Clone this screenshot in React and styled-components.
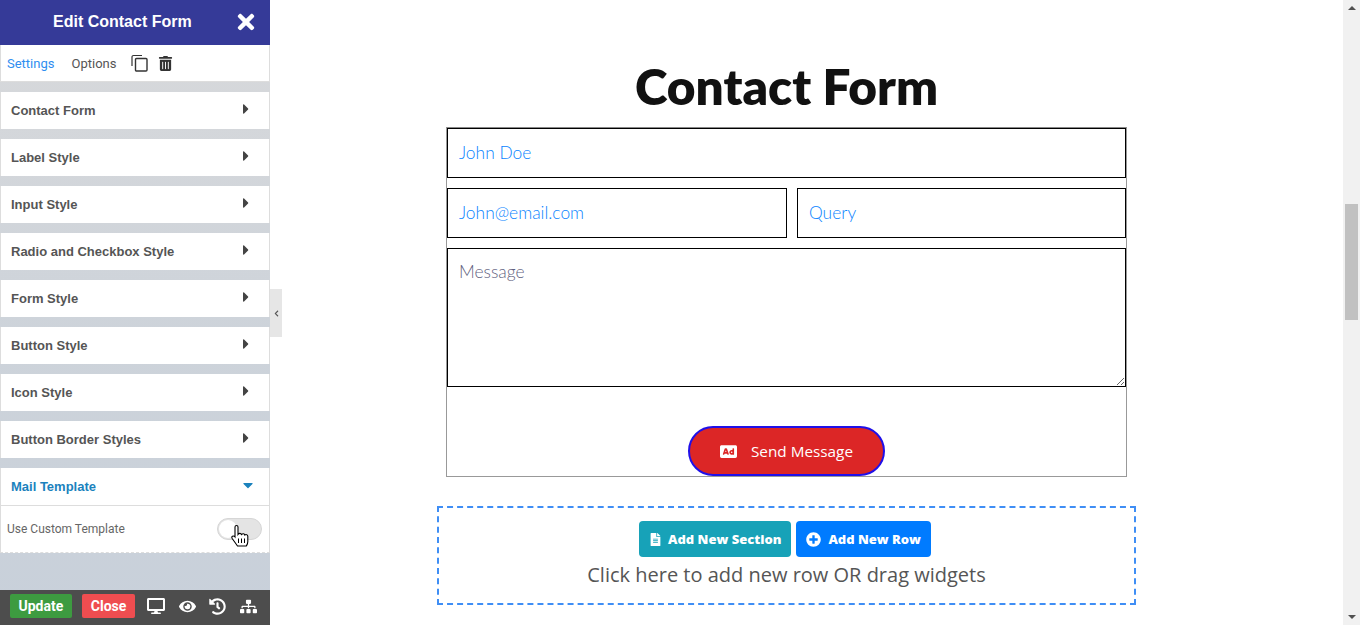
import styled, { createGlobalStyle } from "styled-components";
import {
  FaTimes, FaCaretRight, FaCaretDown, FaTrashAlt, FaDesktop, FaEye, FaHistory,
  FaSitemap, FaFileAlt, FaPlusCircle, FaAd, FaChevronLeft,
} from "react-icons/fa";

const sections = [
  "Contact Form", "Label Style", "Input Style", "Radio and Checkbox Style",
  "Form Style", "Button Style", "Icon Style", "Button Border Styles",
];

const Global = createGlobalStyle`
  html, body { margin: 0; height: 100%; overflow: hidden; background: #fff; }
  * { box-sizing: border-box; }
`;

const Page = styled.div`
  display: flex;
  width: 1360px;
  height: 625px;
  overflow: hidden;
`;

const Sidebar = styled.aside`
  position: relative;
  width: 270px;
  height: 625px;
  flex: none;
  display: flex;
  flex-direction: column;
  background: linear-gradient(180deg, #d8d9db 0%, #cdd3da 55%, #c8d0da 100%);
  font-family: Roboto, sans-serif;
`;

const Header = styled.header`
  height: 45px;
  flex: none;
  background: #353a98;
  color: #fff;
  display: flex;
  align-items: center;
  justify-content: space-between;
  padding: 0 12px 2px 53px;
  font: bold 16px "Liberation Sans", sans-serif;
  svg { font-size: 24px; }
`;

const Tabs = styled.div`
  height: 37px;
  flex: none;
  background: #fff;
  border: 1px solid #ddd;
  border-top: 0;
  display: flex;
  align-items: center;
  padding: 0 6px;
  font-size: 13px;
  color: #555;
`;

const Tab = styled.span`
  color: ${(p) => (p.$active ? "#2f8ef0" : "#555")};
  margin-right: ${(p) => (p.$active ? "17px" : "15px")};
`;

const CopyIcon = styled.svg`
  width: 17px;
  height: 18px;
  margin-right: 10px;
  fill: none;
  stroke: #333;
  stroke-width: 1.200;
`;

const TrashButton = styled.span`
  display: flex;
  color: #333;
  font-size: 15px;
`;

const Accordion = styled.div`
  display: flex;
  flex-direction: column;
  gap: 10px;
  padding-top: 10px;
`;

const Row = styled.div`
  height: 37px;
  background: #fff;
  border: 1px solid #ddd;
  border-width: 0 1px;
  display: flex;
  align-items: center;
  justify-content: space-between;
  padding: 0 ${(p) => (p.$open ? 13 : 15)}px 0 10px;
  font: bold 13px "Liberation Sans", sans-serif;
  color: ${(p) => (p.$open ? "#1b82bd" : "#555")};
  svg { font-size: 16px; margin-top: -3px; color: ${(p) => (p.$open ? "#1b82bd" : "#444")}; }
`;

const OpenGroup = styled.div`
  display: flex;
  flex-direction: column;
`;

const RowBody = styled.div`
  height: 48px;
  background: #fff;
  border: 1px solid #ddd;
  border-bottom: 1px dashed #ddd;
  display: flex;
  align-items: center;
  justify-content: space-between;
  padding: 0 7px 0 6px;
  font-size: 12px;
  color: #666;
`;

const Switch = styled.span`
  position: relative;
  width: 45px;
  height: 22px;
  border-radius: 11px;
  background: #e4e4e4;
  border: 1px solid #d6d6d6;
  &::before {
    content: "";
    position: absolute;
    left: 1px;
    top: 1px;
    width: 18px;
    height: 18px;
    border-radius: 50%;
    background: #fff;
  }
`;

const HandCursor = styled.svg`
  position: absolute;
  left: 13px;
  top: 5px;
  width: 18px;
  height: 25px;
`;

const Footer = styled.footer`
  margin-top: auto;
  height: 35px;
  flex: none;
  background: #4d4d4d;
  display: flex;
  align-items: center;
  padding: 0 13px 3px 10px;
  color: #fff;
`;

const FooterButton = styled.span`
  height: 24px;
  padding: 0 ${(p) => (p.$red ? 9 : 8.5)}px;
  background: ${(p) => (p.$red ? "#ef4d50" : "#3d9b40")};
  border-radius: 2px;
  margin-right: ${(p) => (p.$red ? 12 : 10)}px;
  display: flex;
  align-items: center;
  font-size: 14px;
  font-weight: 700;
`;

const FooterIcons = styled.div`
  flex: 1;
  display: flex;
  align-items: center;
  justify-content: space-between;
  svg { display: block; }
`;

const Handle = styled.div`
  position: absolute;
  left: 270px;
  top: 289px;
  width: 12px;
  height: 48px;
  background: #e6e6e6;
  color: #555;
  display: flex;
  align-items: center;
  justify-content: center;
  font-size: 7px;
`;

const Main = styled.main`
  flex: 1;
  display: flex;
  flex-direction: column;
  align-items: center;
  padding-right: 40px;
  min-width: 0;
`;

const Title = styled.h1`
  margin: 52px 0 0;
  height: 75px;
  font: 800 49.500px/68px Lato, "Open Sans", sans-serif;
  color: #111;
`;

const Form = styled.form`
  width: 681px;
  height: 350px;
  border: 1px solid #999;
  border-top-color: #888;
  display: flex;
  flex-direction: column;
  align-items: center;
  gap: 10px;
`;

const FieldRow = styled.div`
  width: 100%;
  display: flex;
  gap: 10px;
`;

const fieldCss = `
  display: block;
  border: 1.5px solid #000;
  border-radius: 0;
  background: #fff;
  outline: 0;
  padding: 0 11px;
  font: 300 17.400px Lato, sans-serif;
  margin: 0;
`;

const Input = styled.input`
  ${fieldCss}
  width: ${(p) => p.$w}px;
  height: ${(p) => p.$h}px;
  padding-bottom: 1px;
  &::placeholder { color: #0a84ff; opacity: 1; }
`;

const Message = styled.textarea`
  ${fieldCss}
  width: 679px;
  height: 140px;
  padding-top: 12px;
  resize: vertical;
  &::placeholder { color: #5f5f80; opacity: 1; }
`;

const SendButton = styled.button`
  width: 197px;
  height: 50px;
  margin-top: 29px;
  border: 2px solid #2010e8;
  border-radius: 25px;
  background: #dc2626;
  color: #fff;
  display: flex;
  align-items: center;
  justify-content: center;
  gap: 14px;
  font: 15.300px "Open Sans", sans-serif;
  padding: 0;
  svg { font-size: 17px; }
`;

const DropZone = styled.section`
  width: 699px;
  height: 99px;
  margin-top: 29px;
  border: 2px dashed #3f8ef5;
  display: flex;
  flex-direction: column;
  align-items: center;
  padding-top: 13px;
`;

const DropButtons = styled.div`
  display: flex;
  gap: 5px;
  margin-left: -3px;
`;

const DropButton = styled.span`
  height: 36px;
  padding: 0 10px;
  border-radius: 4px;
  background: ${(p) => p.$bg};
  color: #fff;
  display: flex;
  align-items: center;
  gap: ${(p) => p.$gap}px;
  font: 800 13px "Open Sans", sans-serif;
`;

const DropText = styled.div`
  margin-top: 4px;
  font: 20px/27px "Open Sans", sans-serif;
  color: #555;
`;

const Scrollbar = styled.div`
  width: 17px;
  flex: none;
  height: 625px;
  background: #f1f1f1;
  display: flex;
  flex-direction: column;
  align-items: center;
  justify-content: space-between;
  padding: 6px 0;
`;

const Thumb = styled.div`
  width: 13px;
  height: 116px;
  margin-bottom: 102px;
  background: #c1c1c1;
`;

const Arrow = styled.span`
  width: 0;
  height: 0;
  border-left: 4px solid transparent;
  border-right: 4px solid transparent;
  ${(p) => (p.$down ? "border-top: 4px solid #505050;" : "border-bottom: 4px solid #505050;")}
`;

export default function App() {
  return (
    <Page>
      <Global />
      <Sidebar>
        <Header>
          <span>Edit Contact Form</span>
          <FaTimes />
        </Header>
        <Tabs>
          <Tab $active>Settings</Tab>
          <Tab>Options</Tab>
          <CopyIcon viewBox="0 0 17 18">
            <path d="M11 1.500H2.500a1.500 1.500 0 0 0 -1.500 1.500V12" />
            <rect x="4.500" y="4.500" width="11.500" height="12.500" rx="1" strokeWidth="1.400" />
          </CopyIcon>
          <TrashButton><FaTrashAlt /></TrashButton>
        </Tabs>
        <Accordion>
          {sections.map((name) => (
            <Row key={name}>
              {name}
              <FaCaretRight />
            </Row>
          ))}
          <OpenGroup>
            <Row $open>
              Mail Template
              <FaCaretDown />
            </Row>
            <RowBody>
              Use Custom Template
              <Switch>
                <HandCursor viewBox="0 0 18 24">
                  <path
                    d="M4 2.500c0 -2 3 -2 3 0V10c1 -1.500 3 -1.500 3.500 0 1 -1 3 -1 3.300 .5 1 -.8 3 -.5 3 1.200v5.300c0 2.500 -1 3.500 -1.500 4.500H6.500L1.200 14c-1.300 -2 1 -3.500 2.800 -1.500z"
                    fill="#fff"
                    stroke="#000"
                    strokeWidth="1.100"
                  />
                  <path d="M7.500 14v4.500M10.500 14v4.500M13.500 14v4.500" stroke="#000" strokeWidth="1" />
                </HandCursor>
              </Switch>
            </RowBody>
          </OpenGroup>
        </Accordion>
        <Footer>
          <FooterButton>Update</FooterButton>
          <FooterButton $red>Close</FooterButton>
          <FooterIcons>
            <FaDesktop size={18} />
            <FaEye size={17} />
            <FaHistory size={17} />
            <FaSitemap size={17} />
          </FooterIcons>
        </Footer>
        <Handle><FaChevronLeft /></Handle>
      </Sidebar>
      <Main>
        <Title>Contact Form</Title>
        <Form>
          <Input placeholder="John Doe" $w={679} $h={50} />
          <FieldRow>
            <Input placeholder="John@email.com" $w={340} $h={50} />
            <Input placeholder="Query" $w={329} $h={50} />
          </FieldRow>
          <Message placeholder="Message" />
          <SendButton type="button">
            <FaAd />
            Send Message
          </SendButton>
        </Form>
        <DropZone>
          <DropButtons>
            <DropButton $bg="#17a2b8" $gap={6}><FaFileAlt size={13} />Add New Section</DropButton>
            <DropButton $bg="#007bff" $gap={7}><FaPlusCircle size={15} />Add New Row</DropButton>
          </DropButtons>
          <DropText>Click here to add new row OR drag widgets</DropText>
        </DropZone>
      </Main>
      <Scrollbar>
        <Arrow />
        <Thumb />
        <Arrow $down />
      </Scrollbar>
    </Page>
  );
}
